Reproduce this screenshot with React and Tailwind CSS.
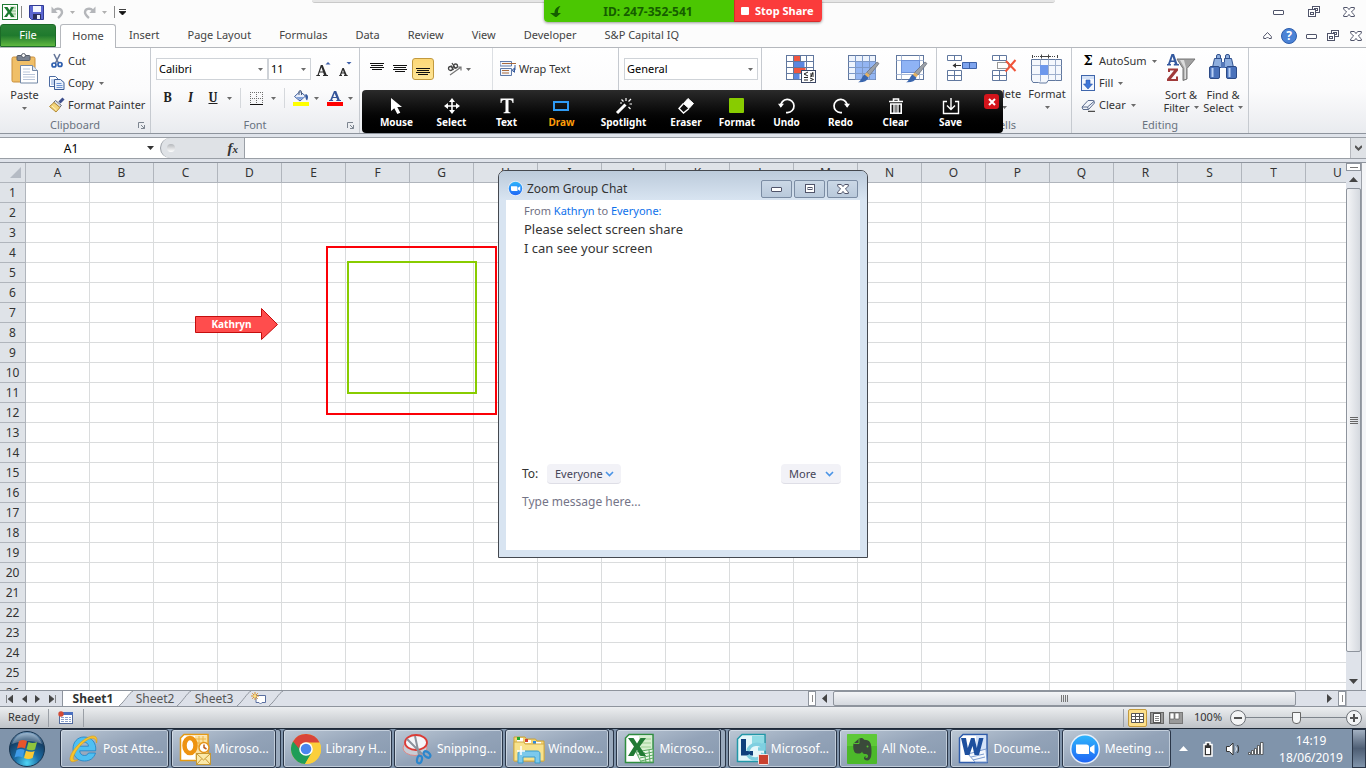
import React from "react";

const COLUMNS = "ABCDEFGHIJKLMNOPQRSTU".split("");
const ROWS = Array.from({ length: 26 }, (_, i) => i + 1);

function Svg({ w, h, className = "", children }) {
  return (
    <svg width={w} height={h} viewBox={`0 0 ${w} ${h}`} className={`shrink-0 ${className}`} fill="none" aria-hidden="true">
      {children}
    </svg>
  );
}

function Caret({ color = "#6b6b6b" }) {
  return (
    <Svg w={5} h={3}>
      <path d="M0 0h5L2.5 3z" fill={color} />
    </Svg>
  );
}

/* ---------- window glyphs ---------- */

function MinGlyph() {
  return (
    <Svg w={12} h={12}>
      <rect x="0.5" y="4.5" width="10" height="4" rx="0.5" fill="#fff" stroke="#50546a" />
    </Svg>
  );
}
function RestoreGlyph() {
  return (
    <Svg w={12} h={12}>
      <rect x="4.5" y="0.5" width="7" height="6" fill="#fff" stroke="#50546a" />
      <rect x="6.5" y="2.5" width="3" height="2" stroke="#50546a" />
      <rect x="0.5" y="3.5" width="7" height="7" fill="#fff" stroke="#50546a" />
      <rect x="2.5" y="6.5" width="3" height="2" stroke="#50546a" />
    </Svg>
  );
}
function CloseGlyph() {
  return (
    <Svg w={12} h={12}>
      <path d="M.7 1.5h3.6L6 3.6l1.7-2.1h3.6v1.6L8.4 6l2.9 2.9v1.6H7.7L6 8.4l-1.7 2.1H.7V8.9L3.6 6 .7 3.1z" fill="#fff" stroke="#50546a" />
    </Svg>
  );
}

/* ---------- quick access ---------- */

function ExcelSmall() {
  return (
    <Svg w={16} h={16}>
      <rect x="0.5" y="0.5" width="15" height="15" fill="#fff" stroke="#1f7a33" />
      <rect x="8" y="2" width="6" height="12" fill="#d9edd6" />
      <path d="M9 4h5M9 7h5M9 10h5" stroke="#86bd85" />
      <path d="M2 3h3.5l2 3 1.8-3H12L9 8l3.5 5H9.2L7 9.8 5 13H2l3.7-5z" fill="#1c7a30" />
    </Svg>
  );
}
function SaveIcon() {
  return (
    <Svg w={15} h={15}>
      <path d="M.5.5h14v14h-12l-2-2z" fill="#5a66d0" stroke="#303a94" />
      <rect x="4" y="1" width="8" height="6" fill="#f3f6fd" />
      <rect x="4" y="9" width="8" height="5" fill="#2a2f5c" />
      <rect x="8" y="10" width="3" height="4" fill="#e9edf9" />
    </Svg>
  );
}
function UndoArrow({ flip }) {
  return (
    <Svg w={13} h={13} className={flip ? "-scale-x-100" : ""}>
      <path d="M3 4.5c3-3 8-2 8 1.8 0 2.4-2 4-4 5.7" stroke="#b4b6ba" strokeWidth="2.4" />
      <path d="M.5.5v6.500h6.200z" fill="#b4b6ba" />
    </Svg>
  );
}

/* ---------- ribbon icons ---------- */

function PasteIcon() {
  return (
    <Svg w={28} h={31}>
      <rect x="1" y="4" width="23" height="25" rx="1.5" fill="#f0bf68" stroke="#c98f3c" />
      <rect x="6" y="2.5" width="13" height="5" rx="1" fill="#7a8290" stroke="#555c68" />
      <circle cx="12.5" cy="2.5" r="2" fill="#f3f3f3" stroke="#555c68" />
      <path d="M9.5 12.500h12l5 5v12.500h-17z" fill="#fff" stroke="#7388a6" />
      <path d="M21.5 12.500v5h5" fill="#dfe7f2" stroke="#7388a6" />
      <path d="M12 16h7M12 19h7M12 21.500h12M12 24h12M12 26.500h12" stroke="#b9c6da" />
    </Svg>
  );
}
function CutIcon() {
  return (
    <Svg w={16} h={16}>
      <path d="M5 1l4.500 9M11 1L6.500 10" stroke="#66779a" strokeWidth="1.600" />
      <circle cx="5" cy="12" r="2" stroke="#2f5fae" strokeWidth="1.700" />
      <circle cx="11" cy="11.5" r="2" stroke="#2f5fae" strokeWidth="1.700" />
    </Svg>
  );
}
function CopyIcon() {
  return (
    <Svg w={16} h={16}>
      <path d="M.5 1.500h6l3 3v7h-9z" fill="#fff" stroke="#4c6ba2" />
      <path d="M2 5h5M2 7h5M2 9h5" stroke="#7ea0d8" />
      <path d="M5.500 4.500h6l3.500 3v7H5.500z" fill="#eaf1fb" stroke="#3b5c96" />
      <path d="M7.500 8.500h5M7.500 10.500h6M7.500 12.500h6" stroke="#6c92d2" />
    </Svg>
  );
}
function PainterIcon() {
  return (
    <Svg w={16} h={16}>
      <path d="M14.500 1.500l-4 4" stroke="#3d4f8c" strokeWidth="3" />
      <path d="M6.500 3.500l6 5-2 2-6-5z" fill="#d7dbe4" stroke="#636a7a" />
      <path d="M5 5.500l6 5-4 4.500-6.500-5.500z" fill="#f3d57c" stroke="#b38a35" />
      <path d="M3 9l4.500 4" stroke="#fff3c4" />
    </Svg>
  );
}
function GrowA() {
  return (
    <Svg w={15} h={15}>
      <path d="M4.800 3h1.900l4 10H12v1H7v-1h1l-.8-2.500H3.500L2.800 13H4v1H.3v-1h1.200zM5.400 5.200L3.900 9.500h3z" fill="#2b2b2b" />
      <path d="M9.500 2.500L12 0l2.500 2.500z" fill="#3d5fa8" />
    </Svg>
  );
}
function ShrinkA() {
  return (
    <Svg w={13} h={15}>
      <path d="M3.400 6h1.400l3 7h.9v1H5v-1h.7l-.5-1.500H2.700l-.5 1.500H3v1H.2v-1h.6zM4 8l-.9 2.500h1.700z" fill="#2b2b2b" />
      <path d="M7.500 0h5L10 2.500z" fill="#3d5fa8" />
    </Svg>
  );
}
function BordersIcon() {
  return (
    <Svg w={13} h={13}>
      <path d="M.5 0v12M6.500 0v12M12.500 0v12M0 .500h13M0 6.500h13" stroke="#6f6f6f" strokeDasharray="1 1" />
      <path d="M0 12.500h13" stroke="#111" />
    </Svg>
  );
}
function BucketIcon() {
  return (
    <Svg w={16} h={16}>
      <path d="M1.500 6.500l5.500-5 5.500 4.500-5.500 5z" fill="#e8eefa" stroke="#3e5f9e" />
      <path d="M3 7h8L7 10z" fill="#7fa0dc" />
      <path d="M6 5V1.500A1.300 1.300 0 0 1 8.500 1.500V5" stroke="#4a5a78" />
      <path d="M12.500 4c3 .5 3 4 1.500 6.500-1.500-1-2-4-1.500-6.500z" fill="#34599f" />
      <path d="M0 12h16v4H0z" fill="#ff0" />
    </Svg>
  );
}
function FontColorIcon() {
  return (
    <Svg w={16} h={16}>
      <path d="M7 1h2.200l3.600 9H14v1H9.300v-1h1l-.7-2H5.800l-.7 2h1v1H2v-1h1.200zM7.600 3.200L6.200 7h2.900z" fill="#34549a" />
      <path d="M0 12h16v4H0z" fill="red" />
    </Svg>
  );
}
function VAlignIcon() {
  return (
    <Svg w={14} h={8}>
      <path d="M0 .500h14M1 2.500h12M0 4.500h14M2 6.500h10" stroke="#111" />
    </Svg>
  );
}
function OrientationIcon() {
  return (
    <Svg w={16} h={14}>
      <g stroke="#444" strokeWidth="1.300">
        <circle cx="3.500" cy="6.500" r="2" />
        <path d="M4 3.500l2.500 4.500" />
        <path d="M5 1l3.500 5.500" />
        <circle cx="8.500" cy="4" r="2" />
      </g>
      <path d="M3 13L13.500 5.500M10.500 5h3.500v3.500" stroke="#777" strokeWidth="1.200" />
    </Svg>
  );
}
function WrapIcon() {
  return (
    <Svg w={16} h={16}>
      <path d="M0 .500h11.500v4.500H0zM.5 7.500h11v7H.500z" fill="#f2f6fc" stroke="#5d79aa" />
      <path d="M2 2.500h14M2 9.500h7M2 12h7" stroke="#a8693c" />
      <path d="M15 4v5h-2M14.500 7L12 9.300l2.500 2z" stroke="#385c9e" />
    </Svg>
  );
}
function Brush() {
  return (
    <g>
      <path d="M29 8l2 1.500L22 21l-3.500-2.500z" fill="#9aa0a8" stroke="#666c75" strokeWidth=".7" />
      <path d="M18.500 18.500L22 21l-2 2.500-3.500-2.500z" fill="#e3b263" />
      <path d="M16.500 20.500l4 3.200c-1.500 3.500-5 5-10.500 4.600 3-1 4-6 6.500-7.800z" fill="#3a66ae" />
    </g>
  );
}
function CondFormatIcon() {
  return (
    <Svg w={31} h={30}>
      <rect x="0.5" y="1.5" width="27" height="24" fill="#fff" stroke="#61789f" />
      <path d="M7.500 2h7v5h-7zM7.500 14h12v5h-12z" fill="#f0553f" />
      <path d="M7.500 8h11v5h-11zM7.500 20h6v5h-6z" fill="#5b86e0" />
      <path d="M.5 7.500h27M.5 13.500h27M.5 19.500h27M7.500 1.500v24M14.500 1.500v6M20.500 1.500v24" stroke="#61789f" />
      <rect x="15.500" y="16.500" width="14" height="12" fill="#fff" stroke="#3a4664" />
      <path d="M22 18l-4 2 4 2M18 23.500h4M18 26h4M24 20h4M24 22h4M27 18l-2 5M24 24l3.500 1.500L24 27" stroke="#222" />
    </Svg>
  );
}
function TableFormatIcon() {
  return (
    <Svg w={32} h={30}>
      <rect x="0.5" y="1.5" width="27" height="24" fill="#eef4fd" stroke="#61789f" />
      <path d="M7.500 7.500h20v18h-20z" fill="#93b5f2" />
      <path d="M.5 7.500h27M.5 13.500h27M.5 19.500h27M7.500 1.500v24M14.500 1.500v24M21.500 1.500v24" stroke="#7d99c8" />
      <Brush />
    </Svg>
  );
}
function CellStyleIcon() {
  return (
    <Svg w={32} h={30}>
      <rect x="0.5" y="1.5" width="27" height="24" fill="#fff" stroke="#61789f" />
      <path d="M.5 6.500h27M.5 20.500h27M5.500 1.500v24M23.500 1.500v24" stroke="#a8b9d6" />
      <rect x="5.5" y="6.5" width="18" height="12" fill="#8fb3f5" stroke="#6d91d8" />
      <Brush />
    </Svg>
  );
}
function InsertIcon() {
  return (
    <Svg w={31} h={28}>
      <path d="M.5 1.500h14v5H.500zM7.500 1.500v5M.5 16.500h14v10H.500zM7.500 16.500v10M.5 21.500h14" fill="#fff" stroke="#61789f" />
      <path d="M15.500 8.500h14v6h-14z" fill="#7ea4ee" stroke="#3e62a8" />
      <path d="M22.500 8.500v6" stroke="#3e62a8" />
      <path d="M6 11.500h8" stroke="#333" />
      <path d="M5.500 11.500l3.500-2.500v5z" fill="#333" />
    </Svg>
  );
}
function DeleteIcon() {
  return (
    <Svg w={25} h={28}>
      <path d="M.5 1.500h14v5H.500zM7.500 1.500v5M.5 16.500h14v10H.500zM7.500 16.500v10M.5 21.500h14" fill="#fff" stroke="#61789f" />
      <path d="M5.500 8.500h11v6h-11z" stroke="#333" strokeDasharray="1 1" />
      <path d="M14 7l9.500 10M23.500 6L13.500 17.500" stroke="#f0553a" strokeWidth="2" />
    </Svg>
  );
}
function FormatCellsIcon() {
  return (
    <Svg w={32} h={30}>
      <path d="M1.500 1v3M26.500 1v3" stroke="#444" />
      <path d="M3 2.500h6M19 2.500h6" stroke="#444" strokeDasharray="1 1" />
      <path d="M9 2.500h10M10.500.500v4M17.500.500v4" stroke="#444" />
      <path d="M.5 5.500h30v21H17l-1.500 2.500H9l-1.500-.5H2L.500 26z" fill="#f5f8fd" stroke="#61789f" />
      <path d="M.5 11.500h30M.5 20.500h30M9.500 5.500v22M17.500 5.500v20M24.500 5.500v21" stroke="#9fb0cd" />
      <path d="M9 11h8v10H9z" fill="#6d98ec" />
    </Svg>
  );
}
function FillIcon() {
  return (
    <Svg w={14} h={16}>
      <rect x="0.5" y="0.5" width="13" height="15" fill="#f4f8fe" stroke="#3f66ac" />
      <path d="M1 1h12v3H1z" fill="#d3e1f7" />
      <path d="M5 5h4v4h2.500L7 14 2.500 9H5z" fill="#3f77d8" stroke="#2c59ab" strokeWidth=".6" />
    </Svg>
  );
}
function EraseIcon() {
  return (
    <Svg w={15} h={13}>
      <path d="M1 8l6-6.500h5.500L13.500 4l-6 6.500H2z" fill="#f1f4fa" stroke="#5b6c8e" />
      <path d="M1 8h5.500l7-6M6.500 8l1 2.500" stroke="#5b6c8e" />
      <path d="M7 12.300h7" stroke="#222" />
    </Svg>
  );
}
function SortIcon() {
  return (
    <Svg w={30} h={30}>
      <path d="M11 6h18l-8 9.500V26l-4 1.500V15.500z" fill="#a2a2a2" stroke="#777" />
      <path d="M14 7h4l2 8v11h-1.500V15z" fill="#dcdcdc" />
      <path d="M5.500 1H8l3.500 10H13v1.500H7.800V11h1l-.5-2H4.700L4 11h1v1.500H1V11h1zM6.500 3.500L5.300 7.500h2.500z" fill="#34599f" />
      <path d="M2 15.500h10v2L5 26h5v-2.500h2V28H1v-2l7-8.500H4V19H2z" fill="#a03a3a" />
    </Svg>
  );
}
function FindIcon() {
  return (
    <Svg w={28} h={28}>
      <rect x="7.500" y="1.500" width="4" height="5" rx="1.500" fill="#8eaede" stroke="#31528f" />
      <rect x="16.500" y="1.500" width="4" height="5" rx="1.500" fill="#8eaede" stroke="#31528f" />
      <path d="M5.500 5.500h7v9H3.500zM15.500 5.500h7l2 9h-9z" fill="#8eaede" stroke="#31528f" />
      <rect x="12" y="9" width="4" height="6" fill="#5578b8" />
      <rect x="0.5" y="13.5" width="10" height="12" rx="1.500" fill="#4a72bb" stroke="#2c4a86" />
      <rect x="17.500" y="13.500" width="10" height="12" rx="1.500" fill="#4a72bb" stroke="#2c4a86" />
      <path d="M3.500 15v9M20.500 15v9" stroke="#b9d0f5" strokeWidth="2" />
    </Svg>
  );
}
function Launcher() {
  return (
    <Svg w={7} h={7}>
      <path d="M.5 6V.500H6M3 3l3.500 3.500M6.500 3v3.500H3" stroke="#7d8590" />
    </Svg>
  );
}

/* ---------- ribbon building blocks ---------- */

function Group({ label, width, launcher, children }) {
  return (
    <section className={`flex shrink-0 flex-col border-r border-[#c6cad0] ${width}`} aria-label={label || "Group"}>
      <div className="flex h-[68px]">{children}</div>
      <div className="relative flex h-[17px] items-center justify-center text-[11px] leading-4 text-[#69727f]">
        {label}
        {launcher && (
          <button aria-label={`${label} settings`} className="absolute right-[5px] top-[6px]">
            <Launcher />
          </button>
        )}
      </div>
    </section>
  );
}

function SmallButton({ icon, label, caret }) {
  return (
    <button className="flex h-[22px] items-center text-[11px] leading-4 whitespace-nowrap text-[#333]">
      <span className="mr-[3px] flex w-4 justify-center">{icon}</span>
      {label}
      {caret && <span className="ml-[5px]"><Caret /></span>}
    </button>
  );
}

function Combo({ label, value, width }) {
  return (
    <div className={`relative flex h-[22px] items-center border border-[#cfd3d8] bg-white ${width}`}>
      <select aria-label={label} className="h-5 w-full appearance-none bg-transparent pl-[2px] text-[11px] leading-4 text-black outline-none">
        <option>{value}</option>
      </select>
      <span className="pointer-events-none absolute right-1 top-[9px]"><Caret /></span>
    </div>
  );
}

function Sep() {
  return <span className="h-5 w-px shrink-0 bg-[#d5d8dc]" />;
}

function Ribbon() {
  return (
    <div className="flex h-[86px] shrink-0 overflow-hidden border-b border-[#8e949d] bg-linear-to-b from-white via-[#fbfbfc] to-[#e9ebef]">
      <Group label="Clipboard" width="w-[151px]" launcher>
        <button className="flex w-[49px] flex-col items-center pt-[5px] text-[11px] leading-4 text-[#333]">
          <PasteIcon />
          <span className="mt-[3px]">Paste</span>
          <span className="mt-1"><Caret /></span>
        </button>
        <div className="flex flex-col pt-[2px]">
          <SmallButton icon={<CutIcon />} label="Cut" />
          <SmallButton icon={<CopyIcon />} label="Copy" caret />
          <SmallButton icon={<PainterIcon />} label="Format Painter" />
        </div>
      </Group>

      <Group label="Font" width="w-[209px]" launcher>
        <div className="flex flex-col pl-[5px] pt-[10px]">
          <div className="flex items-center">
            <Combo label="Font" value="Calibri" width="w-[112px]" />
            <Combo label="Font size" value="11" width="w-[43px]" />
            <button aria-label="Grow font" className="ml-[5px]"><GrowA /></button>
            <button aria-label="Shrink font" className="ml-2"><ShrinkA /></button>
          </div>
          <div className="mt-[7px] flex h-[22px] items-center text-[#222]">
            <button className="w-[23px] font-serif text-[13px] font-bold">B</button>
            <button className="w-[23px] font-serif text-[13px] font-bold italic">I</button>
            <button className="w-[22px] font-serif text-[13px] font-bold underline">U</button>
            <button aria-label="Underline styles" className="ml-[3px] mr-2"><Caret /></button>
            <Sep />
            <button aria-label="Borders" className="ml-[9px] mr-2 flex items-center gap-2"><BordersIcon /><Caret /></button>
            <Sep />
            <button aria-label="Fill color" className="ml-2 flex items-center gap-[5px]"><BucketIcon /><Caret /></button>
            <button aria-label="Font color" className="ml-2 flex items-center gap-[5px]"><FontColorIcon /><Caret /></button>
          </div>
        </div>
      </Group>

      <Group width="w-[259px]">
        <div className="flex h-8 items-center pl-[10px] pt-[10px]">
          <button aria-label="Top align" className="mb-1"><VAlignIcon /></button>
          <button aria-label="Middle align" className="ml-[9px]"><VAlignIcon /></button>
          <button aria-label="Bottom align" className="ml-[5px] flex h-[22px] w-[22px] items-end justify-center rounded-[3px] border border-[#c29a3f] bg-linear-to-b from-[#fdd877] to-[#fee596] pb-[3px]">
            <VAlignIcon />
          </button>
          <span className="ml-1"><Sep /></span>
          <button aria-label="Orientation" className="ml-[9px] flex items-center gap-[3px]"><OrientationIcon /><Caret /></button>
        </div>
        <span className="ml-[21px] w-px bg-[#dcdfe3]" />
        <button className="ml-[7px] mt-[10px] flex h-[22px] items-center gap-[3px] text-[11px] text-[#333]">
          <WrapIcon />
          Wrap Text
        </button>
      </Group>

      <Group width="w-[143px]">
        <div className="pl-[5px] pt-[10px]">
          <Combo label="Number format" value="General" width="w-[134px]" />
        </div>
      </Group>

      <Group width="w-[175px]">
        <div className="flex items-start pl-6 pt-[6px]">
          <button aria-label="Conditional formatting"><CondFormatIcon /></button>
          <button aria-label="Format as table" className="ml-[31px]"><TableFormatIcon /></button>
          <button aria-label="Cell styles" className="ml-4"><CellStyleIcon /></button>
        </div>
      </Group>

      <Group label="Cells" width="w-[135px]">
        <div className="flex items-start pt-[6px] text-[11px] leading-4 text-[#333]">
          <button aria-label="Insert cells" className="ml-[10px]"><InsertIcon /></button>
          <button className="ml-1 flex w-[45px] flex-col items-center">
            <DeleteIcon />
            <span className="mt-[4px]">Delete</span>
            <span className="mt-1"><Caret /></span>
          </button>
          <button className="flex w-10 flex-col items-center">
            <FormatCellsIcon />
            <span className="mt-[2px]">Format</span>
            <span className="mt-1"><Caret /></span>
          </button>
        </div>
      </Group>

      <Group label="Editing" width="w-[177px]">
        <div className="flex flex-col pl-2 pt-[2px]">
          <SmallButton icon={<span className="font-['DejaVu_Serif'] text-[13px] font-bold text-black">Σ</span>} label="AutoSum" caret />
          <SmallButton icon={<FillIcon />} label="Fill" caret />
          <SmallButton icon={<EraseIcon />} label="Clear" caret />
        </div>
        <div className="ml-auto flex pr-1 pt-[5px] text-[11px] leading-[13px] text-[#333]">
          <button className="flex w-[42px] flex-col items-center">
            <SortIcon />
            <span className="mt-[5px] whitespace-nowrap">Sort &amp;</span>
            <span className="flex items-center gap-1 whitespace-nowrap">Filter <Caret /></span>
          </button>
          <button className="flex w-[42px] flex-col items-center">
            <FindIcon />
            <span className="mt-[7px] whitespace-nowrap">Find &amp;</span>
            <span className="flex items-center gap-1 whitespace-nowrap">Select <Caret /></span>
          </button>
        </div>
      </Group>
    </div>
  );
}

/* ---------- header ---------- */

function TitleBar() {
  return (
    <header className="flex h-6 shrink-0 items-center bg-[#fcfcfc] pl-[2px]">
      <ExcelSmall />
      <span className="ml-[3px] h-3 w-px bg-[#888]" />
      <button aria-label="Save" className="ml-[7px]"><SaveIcon /></button>
      <button aria-label="Undo" className="ml-[7px] flex items-center gap-[6px]"><UndoArrow /><Caret color="#b0b0b0" /></button>
      <button aria-label="Redo" className="ml-2 flex items-center gap-[6px]"><UndoArrow flip /><Caret color="#b0b0b0" /></button>
      <span className="ml-[7px] h-3 w-px bg-[#888]" />
      <button aria-label="Customize toolbar" className="ml-1">
        <Svg w={7} h={6}><path d="M0 .500h7M0 2.500h7L3.500 6z" fill="#111" stroke="#111" strokeWidth=".8" /></Svg>
      </button>
      <div className="ml-auto flex items-center gap-[23px] pr-[11px]">
        <button aria-label="Minimize"><MinGlyph /></button>
        <button aria-label="Restore"><RestoreGlyph /></button>
        <button aria-label="Close"><CloseGlyph /></button>
      </div>
    </header>
  );
}

const TABS = ["Insert", "Page Layout", "Formulas", "Data", "Review", "View", "Developer", "S&P Capital IQ"];

function TabRow() {
  return (
    <nav className="flex h-6 shrink-0 items-stretch border-b border-[#b5b8bd] bg-[#fcfcfc] text-[11px] text-[#444]">
      <button className="w-14 rounded-t-[3px] border border-[#1c6b27] bg-linear-to-b from-[#2b8237] via-[#1f7a2d] to-[#5fb83f] text-white">File</button>
      <button className="-mb-px ml-1 w-[56px] rounded-t-[3px] border border-b-0 border-[#b5b8bd] bg-white">Home</button>
      <div className="-ml-px flex">
        {TABS.map((t) => (
          <button key={t} className="px-[14px]">{t}</button>
        ))}
      </div>
      <div className="ml-auto flex items-center pr-1">
        <button aria-label="Collapse ribbon">
          <Svg w={9} h={9}><path d="M.7 5.500L4.500 1.500l3.800 4v2H6L4.500 6 3 7.500H.700z" fill="#fff" stroke="#50546a" /></Svg>
        </button>
        <button aria-label="Help" className="ml-[9px] flex h-4 w-4 items-center justify-center rounded-full border border-[#2c5cab] bg-[#4b83d6] text-[12px] font-bold text-white">?</button>
        <button aria-label="Minimize workbook" className="ml-[9px]"><MinGlyph /></button>
        <button aria-label="Restore workbook" className="ml-[9px]"><RestoreGlyph /></button>
        <button aria-label="Close workbook" className="ml-[11px]"><CloseGlyph /></button>
      </div>
    </nav>
  );
}

function FormulaBar() {
  return (
    <div className="flex h-[29px] shrink-0 flex-col justify-between border-b border-[#8e949d] bg-[#dfe3ea] pt-[3px] pb-1">
      <div className="flex h-[22px] border-y border-[#9a9fa6] bg-[#dfe2e6]">
        <div className="relative flex w-40 bg-white">
          <input aria-label="Name box" defaultValue="A1" className="w-[142px] bg-transparent pt-px text-center text-[12px] text-black outline-none" />
          <span className="absolute right-[6px] top-2">
            <Svg w={7} h={4}><path d="M0 0h7L3.500 4z" fill="#333" /></Svg>
          </span>
        </div>
        <div className="flex flex-1 bg-white">
          <div className="flex w-[84px] items-center justify-between rounded-l-full border-l border-[#9a9fa6] bg-[#dfe2e6] pl-[6px] pr-[6px]">
            <span className="h-2 w-2 rounded-full bg-linear-to-b from-[#b5b8bc] to-white" />
            <span className="font-['Liberation_Serif'] text-[15px] font-bold italic text-[#333]">f<span className="text-[11px]">x</span></span>
          </div>
          <input aria-label="Formula" className="min-w-0 flex-1 border-l border-[#9a9fa6] bg-white px-2 outline-none" />
        </div>
        <button aria-label="Expand formula bar" className="flex w-4 items-center justify-center border-l border-[#b5b8bd] bg-[#dfe2e6]">
          <Svg w={7} h={6}><path d="M0 1l3.500 3.500L7 1" stroke="#555" strokeWidth="2" /></Svg>
        </button>
      </div>
    </div>
  );
}

/* ---------- grid ---------- */

function Grid() {
  return (
    <div className="flex min-h-0 flex-1">
      <div className="min-w-0 flex-1 overflow-hidden bg-white">
        <table className="w-[1370px] table-fixed border-separate border-spacing-0 text-[12px] leading-[18px] text-[#333]">
          <thead>
            <tr>
              <th className="h-5 w-[26px] border-r border-b border-[#b0b5bc] bg-[#dfe3e8] p-0">
                <span className="flex justify-end pr-1">
                  <Svg w={11} h={11}><path d="M11 0v11H0z" fill="#b5bbc4" /></Svg>
                </span>
              </th>
              {COLUMNS.map((c) => (
                <th key={c} scope="col" className="h-5 w-16 border-r border-b border-[#b0b5bc] bg-[#dfe3e8] p-0 pt-px font-normal">{c}</th>
              ))}
            </tr>
          </thead>
          <tbody>
            {ROWS.map((r) => (
              <tr key={r}>
                <th scope="row" className="h-5 border-r border-b border-[#b0b5bc] bg-[#dfe3e8] p-0 pt-px font-normal">{r}</th>
                {COLUMNS.map((c) => (
                  <td key={c} className="h-5 border-r border-b border-[#dadcdd] p-0" />
                ))}
              </tr>
            ))}
          </tbody>
        </table>
      </div>
      <div className="flex w-5 shrink-0 bg-[#f4f5f7]">
        <div className="flex w-4 flex-col items-center border-r border-[#9ba0a8] bg-[#dfe3ea]">
          <div className="flex h-2 w-full items-center justify-center border border-[#8e949d] bg-white"><span className="h-px w-2 bg-[#777]" /></div>
          <button aria-label="Scroll up" className="flex h-[17px] w-full items-center justify-center"><Svg w={9} h={5}><path d="M0 5h9L4.500 0z" fill="#444" /></Svg></button>
          <div className="flex w-full flex-1 flex-col items-center justify-center gap-px rounded-[2px] border border-[#8e949d] bg-linear-to-r from-[#f4f5f7] to-[#d5d9df]">
            <span className="h-px w-2 bg-[#666]" /><span className="h-px w-2 bg-[#666]" /><span className="h-px w-2 bg-[#666]" /><span className="h-px w-2 bg-[#666]" />
          </div>
          <span className="h-5" />
          <button aria-label="Scroll down" className="flex h-[18px] w-full items-center justify-center"><Svg w={9} h={5}><path d="M0 0h9L4.500 5z" fill="#444" /></Svg></button>
        </div>
      </div>
    </div>
  );
}

function Slant() {
  return (
    <Svg w={14} h={15}>
      <path d="M14 0C10 2 6 10 0 15" stroke="#8e949d" />
    </Svg>
  );
}

function SheetBar() {
  return (
    <div className="flex h-4 shrink-0 border-t border-[#8e949d] bg-[#dde1e9]">
      <div className="flex flex-1 items-stretch text-[12px] leading-[15px] text-[#555]">
        <div className="flex w-[63px] items-center justify-between border-r border-[#8e949d] pl-[6px] pr-[6px]">
          <button aria-label="First sheet"><Svg w={7} h={8}><path d="M.5 0v8M7 0v8L2 4z" stroke="#444" fill="#444" strokeWidth=".6" /></Svg></button>
          <button aria-label="Previous sheet"><Svg w={5} h={8}><path d="M5 0v8L0 4z" fill="#444" /></Svg></button>
          <button aria-label="Next sheet"><Svg w={5} h={8}><path d="M0 0v8l5-4z" fill="#444" /></Svg></button>
          <button aria-label="Last sheet"><Svg w={7} h={8}><path d="M6.500 0v8M0 0v8l5-4z" stroke="#444" fill="#444" strokeWidth=".6" /></Svg></button>
        </div>
        <button className="w-[56px] bg-white pl-1 font-bold text-[#333]">Sheet1</button>
        <Svg w={14} h={15}>
          <path d="M0 0h14C10 2 6 10 0 15z" fill="#fff" />
          <path d="M14 0C10 2 6 10 0 15" stroke="#8e949d" />
        </Svg>
        <button className="w-[44px]">Sheet2</button>
        <Slant />
        <button className="w-[46px]">Sheet3</button>
        <Slant />
        <button aria-label="Insert sheet" className="flex w-[18px] items-center">
          <Svg w={16} h={13}>
            <path d="M5 3.500h9.500v7H11l-1.500 1.500L8 10.500H5z" fill="#fff" stroke="#5a6fa0" />
            <path d="M4 0v8M0 4h8M1.200 1.200l5.600 5.600M6.800 1.200L1.200 6.800" stroke="#d9902f" />
            <circle cx="4" cy="4" r="1.500" fill="#ffe27a" />
          </Svg>
        </button>
        <Slant />
      </div>
      <div className="flex w-[538px] shrink-0 items-stretch">
        <span className="flex w-2 items-center justify-center border border-[#8e949d] bg-white"><span className="h-[7px] w-px bg-[#888]" /></span>
        <button aria-label="Scroll left" className="flex w-[17px] items-center justify-center"><Svg w={5} h={9}><path d="M5 0v9L0 4.500z" fill="#444" /></Svg></button>
        <div className="flex w-[463px] items-center justify-center gap-px rounded-[2px] border border-[#8e949d] bg-linear-to-b from-[#f4f5f7] to-[#d5d9df]">
          <span className="h-[7px] w-px bg-[#777]" /><span className="h-[7px] w-px bg-[#777]" /><span className="h-[7px] w-px bg-[#777]" /><span className="h-[7px] w-px bg-[#777]" />
        </div>
        <button aria-label="Scroll right" className="ml-auto mr-[6px] flex items-center"><Svg w={5} h={9}><path d="M0 0v9l5-4.500z" fill="#444" /></Svg></button>
        <span className="flex w-2 items-center justify-center border border-[#8e949d] bg-white"><span className="h-[7px] w-px bg-[#888]" /></span>
      </div>
      <span className="w-5 shrink-0 border-l border-[#b5b8bd]" />
    </div>
  );
}

function StatusBar() {
  return (
    <div className="flex h-[22px] shrink-0 items-center border-t border-[#8e949d] bg-linear-to-b from-[#eceef0] to-[#bfc3c8] pl-2 text-[11px] text-[#333]">
      <span>Ready</span>
      <span className="ml-2 h-[18px] w-px bg-[#9a9fa6]" />
      <button aria-label="Record macro" className="ml-[9px]">
        <Svg w={16} h={14}>
          <rect x="1.500" y="1.500" width="13" height="11" fill="#fff" stroke="#51699c" />
          <path d="M5 1h10v3H5z" fill="#4a6fc0" />
          <path d="M3 6.500h10M3 8.500h10M3 10.500h10" stroke="#8aa0cc" strokeDasharray="3 1" />
          <circle cx="3" cy="3" r="2.700" fill="#d34a34" />
        </Svg>
      </button>
      <span className="ml-[9px] h-[18px] w-px bg-[#9a9fa6]" />
      <div className="ml-auto flex items-center">
        <span className="h-[18px] w-px bg-[#9a9fa6]" />
        <button aria-label="Normal view" className="ml-1 flex h-[18px] w-[19px] items-center justify-center rounded-[2px] border border-[#c29a3f] bg-[#fde08a]">
          <Svg w={13} h={10}><path d="M.5.500h12v9H.500zM.5 3.500h12M.5 6.500h12M4.500.500v9M8.500.500v9" fill="#fff" stroke="#555" /></Svg>
        </button>
        <button aria-label="Page layout view" className="ml-[3px]">
          <Svg w={14} h={12}><rect x=".500" y=".500" width="13" height="11" fill="#9a9a9a" stroke="#666" /><rect x="3.500" y="1.500" width="7" height="9" fill="#fff" stroke="#555" /><path d="M5 4.500h4M5 6.500h4M5 8.500h4" stroke="#888" /></Svg>
        </button>
        <button aria-label="Page break view" className="ml-[5px]">
          <Svg w={14} h={12}><rect x=".500" y=".500" width="13" height="11" fill="#9a9a9a" stroke="#777" /><path d="M1 1h4v6H1zM6 1h4v6H6z" fill="#fff" stroke="#555" strokeWidth=".6" /></Svg>
        </button>
        <span className="ml-[11px] w-9">100%</span>
        <button aria-label="Zoom out" className="flex h-4 w-4 items-center justify-center rounded-full border border-[#6d7177] bg-[#f3f4f5]"><span className="h-[2px] w-2 bg-[#555]" /></button>
        <input
          type="range"
          aria-label="Zoom level"
          defaultValue="51"
          className="m-0 h-4 w-[100px] appearance-none bg-transparent bg-linear-to-r from-[#7e848c] to-[#7e848c] bg-[length:100%_1px] bg-center bg-no-repeat [&::-webkit-slider-thumb]:h-3 [&::-webkit-slider-thumb]:w-[9px] [&::-webkit-slider-thumb]:appearance-none [&::-webkit-slider-thumb]:rounded-b-[4px] [&::-webkit-slider-thumb]:border [&::-webkit-slider-thumb]:border-[#666] [&::-webkit-slider-thumb]:bg-[#f6f7f8]"
        />
        <button aria-label="Zoom in" className="mr-1 flex h-4 w-4 items-center justify-center rounded-full border border-[#6d7177] bg-[#f3f4f5]">
          <Svg w={8} h={8}><path d="M4 0v8M0 4h8" stroke="#555" strokeWidth="2" /></Svg>
        </button>
      </div>
    </div>
  );
}

/* ---------- taskbar ---------- */

function StartOrb() {
  return (
    <svg width="38" height="38" viewBox="0 0 38 38" aria-hidden="true">
      <defs>
        <radialGradient id="orb" cx="50%" cy="90%" r="85%">
          <stop offset="0" stopColor="#4fd5f5" />
          <stop offset=".4" stopColor="#1c6ea6" />
          <stop offset=".8" stopColor="#153f66" />
          <stop offset="1" stopColor="#6d93b5" />
        </radialGradient>
      </defs>
      <circle cx="19" cy="19" r="17.500" fill="url(#orb)" stroke="#17344f" />
      <path d="M4 14C7 6 13 3 19 3s12 3 15 11c-9-4-20-4-30 0z" fill="#fff" opacity=".3" />
      <path d="M11 11c3-1.500 5.500-1.300 8 .2L17 18.500c-2.600-1.300-5-1.400-8 0z" fill="#e8562c" />
      <path d="M20.500 12c2.700 1.400 5.500 1.500 8.500 0L27 19.400c-3 1.400-5.600 1.200-8.500-.2z" fill="#8fc43e" />
      <path d="M8.600 20c3-1.400 5.400-1.300 8 .1L14.500 27.500c-2.500-1.400-5-1.500-8 0z" fill="#3f9be8" />
      <path d="M18 20.700c2.800 1.400 5.600 1.500 8.600.2L24.600 28c-3 1.400-5.900 1.300-8.600-.1z" fill="#fbc934" />
    </svg>
  );
}
function IEIcon() {
  return (
    <Svg w={31} h={31}>
      <path fillRule="evenodd" d="M16 4C9.500 4 5 9 5 16s4.500 12 11.500 12c5.500 0 9.500-3 11-8h-7c-.8 1.700-2 2.500-4 2.500-2.800 0-4.500-1.600-4.800-4.700h16C28.500 10 24 4 16 4zM11.800 13.200c.5-2.700 2.200-4 4.400-4s4 1.300 4.300 4z" fill="#4fc0f2" stroke="#1d83c6" strokeWidth=".8" />
      <path d="M28.500 10c1.500-5-.5-8-5.500-6.800C15 5 3.500 17 2 25c-.7 4.800 4 4.500 8 1.800-3.500 1-5.500.2-4.500-3C7.500 17 16 7.500 22.500 5.500c4-1 5.700 1 6 4.500z" fill="#f7c42c" stroke="#d89a17" strokeWidth=".6" />
    </Svg>
  );
}
function OutlookIcon() {
  return (
    <Svg w={32} h={32}>
      <path d="M5 1.500h24v26H1.500V5z" fill="#fff" stroke="#e59a12" strokeWidth="1.500" />
      <path d="M16 3h12v23H16z" fill="#fbe2a3" />
      <path d="M17 6h10M17 10h10M20 3v11M24 3v11" stroke="#edb646" />
      <ellipse cx="11" cy="12.500" rx="5.500" ry="7.500" stroke="#ee9310" strokeWidth="4.500" />
      <circle cx="25" cy="14.500" r="5" fill="#fff" stroke="#e5951b" strokeWidth="1.500" />
      <path d="M25 11.500v3l2.500 1.500" stroke="#bd5b1a" strokeWidth="1.500" />
      <rect x="17.500" y="20.500" width="14" height="11" fill="#fbe9a9" stroke="#c69833" />
      <path d="M17.500 20.500l7 6.500 7-6.500M17.500 31.500l5-5.500M31.500 31.500l-5-5.500" stroke="#c69833" />
    </Svg>
  );
}
function ChromeIcon() {
  return (
    <Svg w={30} h={30}>
      <circle cx="15" cy="15" r="15" fill="#fbcf3b" />
      <path d="M15 15l6 3.500L14 30A15 15 0 0 1 2 7.500z" fill="#1f9d58" />
      <path d="M15 8h13.300A15 15 0 0 1 14 30l7-12z" fill="#fbcf3b" />
      <path d="M2 7.500A15 15 0 0 1 28.500 8.500H15A6.500 6.500 0 0 0 8 14.500z" fill="#d9453a" />
      <circle cx="15" cy="15" r="6.800" fill="#fff" />
      <circle cx="15" cy="15" r="5.300" fill="#4a86ee" />
    </Svg>
  );
}
function SnipIcon() {
  return (
    <Svg w={31} h={32}>
      <ellipse cx="13" cy="15" rx="12" ry="7.500" fill="#c9ccd4" stroke="#d88" />
      <ellipse cx="14" cy="9.500" rx="11" ry="7.500" fill="#f5f6fa" stroke="#dc3a35" strokeWidth="1.800" />
      <path d="M5 6l15 15M13 3l4 19" stroke="#8c929c" strokeWidth="2" />
      <ellipse cx="17.500" cy="26.500" rx="2.400" ry="3.800" transform="rotate(12 17.500 26.500)" stroke="#2b86cd" strokeWidth="2.200" />
      <ellipse cx="25" cy="21.500" rx="2.400" ry="3.800" transform="rotate(-50 25 21.500)" stroke="#2b86cd" strokeWidth="2.200" />
    </Svg>
  );
}
function ExplorerIcon() {
  return (
    <Svg w={32} h={30}>
      <path d="M1 3h11l1.500 2h9L24 7h7v20H1z" fill="#f3d675" stroke="#c9a13a" />
      <path d="M4 4h6v4H4zM12 6h6v3h-6zM20 8h8v3h-8z" fill="#fff" />
      <path d="M4 3h3v3H4z" fill="#22a82c" /><path d="M12 5h3v3h-3z" fill="#d2402e" /><path d="M20 7h3v3h-3z" fill="#2e8adf" />
      <path d="M1 8h10l1 2h19v17H1z" fill="#f8e28c" stroke="#d2ab46" />
      <path d="M5 29V20c0-2 1-3 3-3h16c2 0 3 1 3 3v9h-5v-6H10v6z" fill="#7cc9ec" stroke="#3a9bca" />
      <path d="M8 12v9M4 17h8" stroke="#fff" strokeWidth="1.500" />
    </Svg>
  );
}
function ExcelIcon() {
  return (
    <Svg w={31} h={31}>
      <path d="M5 1.500h24v28H1.500V5z" fill="#fff" stroke="#2f8d3f" strokeWidth="1.500" />
      <path d="M15 3h13v15H15z" fill="#d6efcf" />
      <path d="M17 6h10M17 10h10M17 14h10" stroke="#9bcf91" />
      <path d="M12 19l17-3v13H17z" fill="#eaf6e7" stroke="#58a860" />
      <path d="M14 22l15-3M16 25l13-3M17 28l12-3M20 19l2 10M25 17l1 12" stroke="#58a860" />
      <path d="M4 5h5.500l3.500 5.500L16.500 5H22l-6.200 8.500L22 23h-5.500L13 17l-3.500 6H4l6-9.500z" fill="#217a34" />
    </Svg>
  );
}
function LyncIcon() {
  return (
    <Svg w={33} h={32}>
      <path d="M6 1.500h23v27H1.500V6z" fill="#e4f7fa" stroke="#2197a8" strokeWidth="1.500" />
      <path d="M16 3h12v8H16z" fill="#8fdbe4" />
      <path d="M5 6h5v12h7v4.500H5z" fill="#10407c" />
      <path d="M12 18c2-8 13-9 16-2M28 10v6h-6M27 20c-2 7-11 8-15 2" stroke="#7fcfe0" strokeWidth="3.500" />
      <rect x="22.500" y="21.500" width="10" height="10" rx="1" fill="#c9412e" stroke="#fff" strokeWidth=".8" />
    </Svg>
  );
}
function EvernoteIcon() {
  return (
    <Svg w={30} h={30}>
      <rect width="30" height="30" rx="1" fill="#4cb92a" />
      <path d="M0 0h30v12H0z" fill="#6bd443" opacity=".6" />
      <path d="M12 4.500l-5.500 5c-.8 4 .3 8.500 2 9.500 3 1 6 .8 6.500-1.500.5 2 1.500 2.500 4 2.500 2.500.2 3 3.500.5 4-1.500.2-1.500-1.500-.3-2-3 0-3.200 4.500 1 4.500 4.300 0 4.800-7 4-14-.3-3.500-1.500-6-5-6.500l-2-.2C16 4 14.500 3.500 12 4.500z" fill="#3a4a3a" />
      <path d="M12 4.500v5H6.500" stroke="#54c22f" />
      <circle cx="20.500" cy="12.500" r="1" fill="#54c22f" />
    </Svg>
  );
}
function WordIcon() {
  return (
    <Svg w={31} h={31}>
      <path d="M5 1.500h24v28H1.500V5z" fill="#fff" stroke="#2f5cab" strokeWidth="1.500" />
      <path d="M18 3h10v15H18z" fill="#d3e2f8" />
      <path d="M10 21l18-5 1 13H17z" fill="#f2f6fd" stroke="#7c9ccf" />
      <path d="M13 24l13-3M15 27l12-3" stroke="#7c9ccf" />
      <path d="M3 5h5l1.800 10L13 5h3.500l2.300 10L21 5h4.500L21 22h-4.500l-2-9-3 9H7z" fill="#1d4f9e" />
    </Svg>
  );
}
function ZoomIcon({ size = 30 }) {
  return (
    <svg width={size} height={size} viewBox="0 0 30 30" className="shrink-0" aria-hidden="true">
      <defs>
        <linearGradient id="zm" x1="0" y1="0" x2="0" y2="1">
          <stop offset="0" stopColor="#2fb4fb" />
          <stop offset="1" stopColor="#1f66f5" />
        </linearGradient>
      </defs>
      <circle cx="15" cy="15" r="15" fill="#e9f0fa" />
      <circle cx="15" cy="15" r="13.500" fill="url(#zm)" />
      <path d="M6 10.500h10.500a2.500 2.500 0 0 1 2.500 2.500v7H8.500A2.500 2.500 0 0 1 6 17.500zM20 13.500l4.500-3v9.500l-4.500-3z" fill="#fff" />
    </svg>
  );
}

const TASKS = [
  { name: "Post Atte...", icon: <IEIcon /> },
  { name: "Microso...", icon: <OutlookIcon />, stacked: true },
  { name: "Library H...", icon: <ChromeIcon /> },
  { name: "Snipping...", icon: <SnipIcon /> },
  { name: "Window...", icon: <ExplorerIcon />, stacked: true },
  { name: "Microso...", icon: <ExcelIcon />, stacked: true },
  { name: "Microsof...", icon: <LyncIcon /> },
  { name: "All Note...", icon: <EvernoteIcon /> },
  { name: "Docume...", icon: <WordIcon /> },
  { name: "Meeting ...", icon: <ZoomIcon /> },
];

function Taskbar() {
  return (
    <footer className="flex h-10 shrink-0 border-t border-[#1f2a38] bg-[#8094ab]">
      <button aria-label="Start" className="flex w-[60px] items-center justify-center pr-[6px]"><StartOrb /></button>
      <div className="flex w-[1113px]">
        {TASKS.map((t, i) => (
          <div key={i} className="flex flex-1 pr-[2px]">
            <button className="flex h-[39px] min-w-0 flex-1 items-center rounded-[3px] border border-[#2a3648] bg-linear-to-br from-[#bcc8d5] via-[#93a3b8] via-50% to-[#8698ae] pl-[7px] text-[12px] whitespace-nowrap text-white inset-shadow-[0_0_0_1px_rgba(225,233,242,0.6)]">
              <span className="flex w-[35px] shrink-0">{t.icon}</span>
              {t.name}
            </button>
            {t.stacked && <span className="w-[5px] rounded-r-[3px] border border-l-0 border-[#2a3648] bg-[#9aaabd]" />}
          </div>
        ))}
      </div>
      <div className="ml-auto flex items-center text-white">
        <button aria-label="Show hidden icons" className="mr-[15px]"><Svg w={9} h={5}><path d="M0 5h9L4.500 0z" fill="#fff" /></Svg></button>
        <Svg w={10} h={16} className="mr-[13px]">
          <path d="M3 1.500h4v2h2v11.500H1V3.500h2z" fill="#333" stroke="#fff" strokeWidth="1.500" />
          <path d="M3 7h4v6H3z" fill="#fff" />
        </Svg>
        <Svg w={13} h={14} className="mr-[9px]">
          <path d="M.5 4.500h3L7 1v12L3.500 9.500h-3z" fill="#fff" stroke="#333" />
          <path d="M9.500 4.500c1 1.500 1 3.500 0 5" stroke="#fff" />
          <path d="M11.500 3c1.500 2.500 1.500 5.500 0 8" stroke="#333" />
        </Svg>
        <Svg w={16} h={13} className="mr-[6px]">
          <path d="M.5 10.500h2v2h-2zM3.500 8.500h2v4h-2zM6.500 6.500h2v6h-2zM9.500 3.500h2v9h-2zM12.500.500h2.500v12h-2.500z" fill="#fff" stroke="#333" strokeWidth=".7" />
        </Svg>
        <div className="flex w-[82px] flex-col items-center text-[12px] leading-[17px]">
          <span>14:19</span>
          <span>18/06/2019</span>
        </div>
        <button aria-label="Show desktop" className="h-full w-[14px] border border-[#2a3648] bg-linear-to-b from-[#a3b1c2] via-[#4e5e74] to-[#8094ab]" />
      </div>
    </footer>
  );
}

/* ---------- floating layers ---------- */

const TOOLS = [
  { name: "Mouse", w: "w-[55px]", icon: <path d="M3 1v13l3.300-2.800L9.300 17l3-1.300-3-5.700H14z" fill="#fff" /> },
  {
    name: "Select", w: "w-[55px]",
    icon: (
      <g fill="#fff">
        <path d="M9 1l3 4H6zM9 17l3-4H6zM1 9l4-3v6zM17 9l-4-3v6z" />
        <path d="M9 4v10M4 9h10" stroke="#fff" strokeWidth="1.600" />
      </g>
    ),
  },
  { name: "Text", w: "w-[55px]", icon: <path d="M2.500 1.500h13v4.500h-1c-.3-2-.8-2.900-2.500-2.900h-1.500V14c0 1 .5 1.300 2 1.400v.9h-7v-.9c1.500-.1 2-.4 2-1.400V3.100H6C4.300 3.100 3.800 4 3.500 6h-1z" fill="#fff" /> },
  { name: "Draw", w: "w-[55px]", active: true, icon: <rect x="1" y="5" width="14" height="8" stroke="#2f9bf5" strokeWidth="2" /> },
  {
    name: "Spotlight", w: "w-[69px]",
    icon: (
      <g stroke="#fff">
        <path d="M2 16l8.500-8.500" strokeWidth="3" />
        <path d="M11 1v3M6.500 2.500l2 2M16 2l-2.500 2.500M14.500 7H17M13.500 10l2 2M5 6h2" strokeWidth="1.200" />
      </g>
    ),
  },
  {
    name: "Eraser", w: "w-[56px]",
    icon: (
      <g>
        <path d="M11 1.500l5.500 5L12 11.500l-5.500-5z" fill="#fff" stroke="#fff" />
        <path d="M6.500 6.500L2 11.500l4.500 4.500 5.500-4.500" stroke="#fff" strokeWidth="1.400" />
      </g>
    ),
  },
  { name: "Format", w: "w-[46px]", icon: <rect x="1" y="1" width="15" height="15" rx="1" fill="#8c0" /> },
  {
    name: "Undo", w: "w-[53px]",
    icon: (
      <g>
        <path d="M2.800 9.500A6.600 6.600 0 1 1 9.500 15.600H8" stroke="#fff" strokeWidth="1.700" />
        <path d="M0 6.800h6L2.800 10.800z" fill="#fff" />
      </g>
    ),
  },
  {
    name: "Redo", w: "w-[55px]",
    icon: (
      <g>
        <path d="M15.200 9.500A6.600 6.600 0 1 0 8.500 15.600H10" stroke="#fff" strokeWidth="1.700" />
        <path d="M18 6.800h-6l3.200 4z" fill="#fff" />
      </g>
    ),
  },
  {
    name: "Clear", w: "w-[55px]",
    icon: (
      <g stroke="#fff" strokeWidth="1.600">
        <path d="M2 4.500h14M6.500 4V2h5v2M3.800 7h10.400v9.200H3.800z" />
        <path d="M7 7v9M11 7v9" strokeWidth="1.400" />
        <path d="M9 7v9" strokeWidth="1" />
      </g>
    ),
  },
  { name: "Save", w: "w-[55px]", icon: <path d="M5 4.500H1.500v12h15v-12H13M9 1v11M5 8.500l4 4 4-4" stroke="#fff" strokeWidth="1.400" /> },
];

function AnnotationBar() {
  return (
    <div role="toolbar" aria-label="Annotation" className="absolute left-[362px] top-[90px] flex h-[43px] w-[641px] rounded-[4px] bg-linear-to-b from-[#2b2b2b] to-black pl-[7px]">
      {TOOLS.map((t) => (
        <button key={t.name} className={`flex shrink-0 flex-col items-center pt-[7px] text-[10px] leading-[14px] font-bold ${t.w} ${t.active ? "text-[#ff9d0a]" : "text-white"}`}>
          <Svg w={18} h={18}>{t.icon}</Svg>
          {t.name}
        </button>
      ))}
      <button aria-label="Close annotation toolbar" className="absolute right-1 top-1 flex h-[15px] w-[15px] items-center justify-center rounded-[3px] bg-[#d4141b]">
        <Svg w={8} h={8}><path d="M1 1l6 6M7 1L1 7" stroke="#fff" strokeWidth="2" /></Svg>
      </button>
    </div>
  );
}

function ShareBar() {
  return (
    <div className="absolute inset-x-0 top-0 flex justify-center">
      <span className="absolute left-[312px] right-[311px] top-0 h-[3px] rounded-b-[3px] border-b border-[#c9c9c9] bg-[#e6e6e6]" />
      <div className="relative flex h-[22px] overflow-hidden rounded-b-[4px] text-[12px] leading-[21px] font-bold shadow-[0_1px_3px_rgba(0,0,0,0.4)]">
        <div className="flex w-[190px] items-center bg-[#4bc702] pl-[6px] text-[#155d00]">
          <Svg w={11} h={11}><path d="M4.500 7C4.500 3 7 .500 10.500 0 8.500 2 7.800 4.500 8 7h3L6 11.500 0 7z" fill="#155d00" /></Svg>
          <span className="flex-1 pl-px text-center">ID: 247-352-541</span>
        </div>
        <button className="flex w-[88px] items-center gap-[6px] border-b border-l border-[#d92a2a] bg-[#fb3b3b] pl-[6px] text-[11px] text-white">
          <span className="h-2 w-2 rounded-[1px] bg-white" />
          <span className="whitespace-nowrap">Stop Share</span>
        </button>
      </div>
    </div>
  );
}

function Chevron() {
  return (
    <Svg w={9} h={6}><path d="M1 1l3.500 3.500L8 1" stroke="#4a94e6" strokeWidth="1.600" /></Svg>
  );
}

function ChatWindow() {
  const frameButton = "flex h-[18px] w-[31px] items-center justify-center rounded-[2px] border border-[#7b8ca3] bg-linear-to-b from-[#cbd8e6] to-[#b9c9db]";
  return (
    <section aria-label="Zoom Group Chat" className="absolute left-[498px] top-[170px] flex h-[388px] w-[370px] flex-col rounded-t-[7px] border border-[#44484f] bg-[#d8e4f1] px-[7px] pb-[7px]">
      <div className="-mx-[7px] flex h-[29px] shrink-0 items-center rounded-t-[6px] bg-linear-to-b from-[#bccbdb] to-[#d8e4f1] pl-[9px] pr-[9px] pt-[6px] text-[12px] text-[#333]">
        <ZoomIcon size={15} />
        <h2 className="ml-1">Zoom Group Chat</h2>
        <div className="ml-auto flex gap-[2px]">
          <button aria-label="Minimize chat" className={frameButton}><MinGlyph /></button>
          <button aria-label="Maximize chat" className={frameButton}>
            <Svg w={12} h={10}><rect x="1.500" y=".500" width="9" height="8" fill="#fff" stroke="#50546a" /><rect x="4" y="3.500" width="4" height="2" stroke="#50546a" /></Svg>
          </button>
          <button aria-label="Close chat" className={frameButton}><CloseGlyph /></button>
        </div>
      </div>
      <div className="flex min-h-0 flex-1 flex-col bg-white">
        <div className="flex-1 pl-[18px] pt-[2px] text-[13px] leading-[19px] text-[#333]">
          <p className="text-[11px] leading-[18px] text-[#6f6f82]">From <span className="text-[#0e71eb]">Kathryn</span> to <span className="text-[#0e71eb]">Everyone:</span></p>
          <p>Please select screen share</p>
          <p>I can see your screen</p>
        </div>
        <div className="flex items-center pl-4 pr-[19px] text-[11px] text-[#444457]">
          <span className="w-[25px] text-[12px] text-[#333]">To:</span>
          <button className="flex h-5 w-[74px] items-center justify-between rounded-[4px] border-b border-[#dedee6] bg-[#f2f2f7] pl-2 pr-[7px] pt-px">Everyone <Chevron /></button>
          <button className="ml-auto flex h-5 w-[60px] items-center justify-between rounded-[4px] border-b border-[#dedee6] bg-[#f2f2f7] pl-2 pr-[7px] pt-px">More <Chevron /></button>
        </div>
        <textarea aria-label="Message" placeholder="Type message here..." className="h-[66px] resize-none pl-4 pt-[9px] text-[12px] leading-[18px] outline-none placeholder:text-[#747487]" />
      </div>
    </section>
  );
}

function Drawings() {
  return (
    <>
      <div className="absolute left-[326px] top-[246px] h-[169px] w-[171px] border-2 border-[#fb0007]" />
      <div className="absolute left-[347px] top-[261px] h-[133px] w-[130px] border-2 border-[#8c0]" />
      <div className="absolute left-[195px] top-[308px] flex h-8 w-[83px] items-center">
        <Svg w={83} h={32} className="absolute inset-0">
          <path d="M.5 8.500h66v-8l16 16-16 15v-7H.500z" fill="#ff4d4d" stroke="#c40d0d" />
        </Svg>
        <span className="relative w-[73px] text-center text-[10px] leading-4 font-bold text-white">Kathryn</span>
      </div>
    </>
  );
}

export default function App() {
  return (
    <main className="relative flex h-screen flex-col overflow-hidden bg-white font-['Noto_Sans','Open_Sans',sans-serif]">
      <TitleBar />
      <TabRow />
      <Ribbon />
      <FormulaBar />
      <Grid />
      <SheetBar />
      <StatusBar />
      <Taskbar />
      <Drawings />
      <ChatWindow />
      <AnnotationBar />
      <ShareBar />
    </main>
  );
}
